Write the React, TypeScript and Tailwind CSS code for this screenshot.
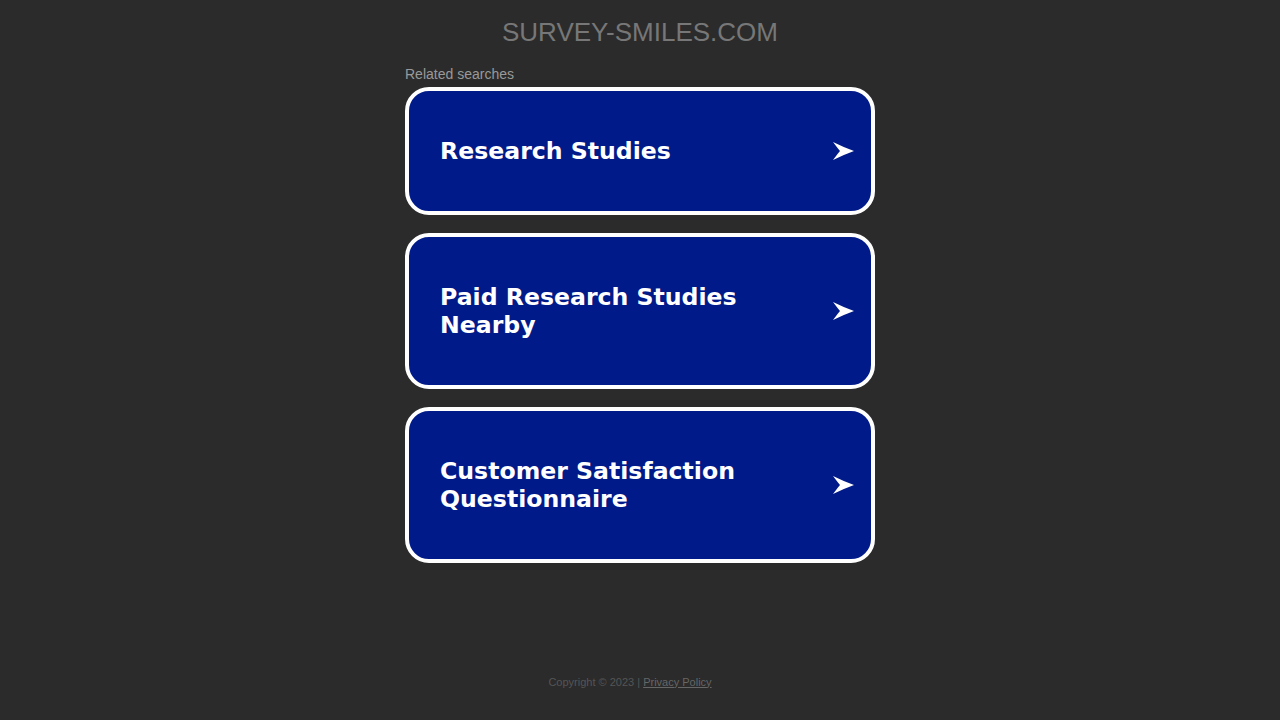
const searches = [
  "Research Studies",
  "Paid Research Studies Nearby",
  "Customer Satisfaction Questionnaire",
];

function Arrow() {
  return (
    <svg width="21" height="18" viewBox="0 0 21 18" className="shrink-0">
      <path d="M0 0 Q10 5 21 9 Q10 13 0 18 Q6 10 7 9 Q6 8 0 0 Z" fill="#ffffff" />
    </svg>
  );
}

export default function App() {
  return (
    <div className="min-h-screen bg-[#2b2b2b] flex flex-col items-center font-['Liberation_Sans',Arial,sans-serif]">
      <h1 className="mt-[16px] text-[26px] leading-[32px] text-[#777777]">SURVEY-SMILES.COM</h1>
      <div className="w-[470px] mt-[18px]">
        <div className="text-[14px] leading-[16px] text-[#999999]">Related searches</div>
        <div className="mt-[5px] flex flex-col gap-[18px]">
          {searches.map((s) => (
            <a
              key={s}
              href="#"
              className="flex items-center justify-between rounded-[24px] border-4 border-white bg-[#011a8a] pl-[31px] pr-[17px] py-[46px]"
            >
              <span className="max-w-[340px] text-[23.6px] leading-[28px] font-bold text-white font-['DejaVu_Sans',Verdana,sans-serif]">
                {s}
              </span>
              <Arrow />
            </a>
          ))}
        </div>
      </div>
      <div className="mt-auto mb-[30px] pr-[20px] text-[11px] text-[#555555]">
        Copyright © 2023 |{" "}
        <a href="#" className="underline text-[#666666]">Privacy Policy</a>
      </div>
    </div>
  );
}
